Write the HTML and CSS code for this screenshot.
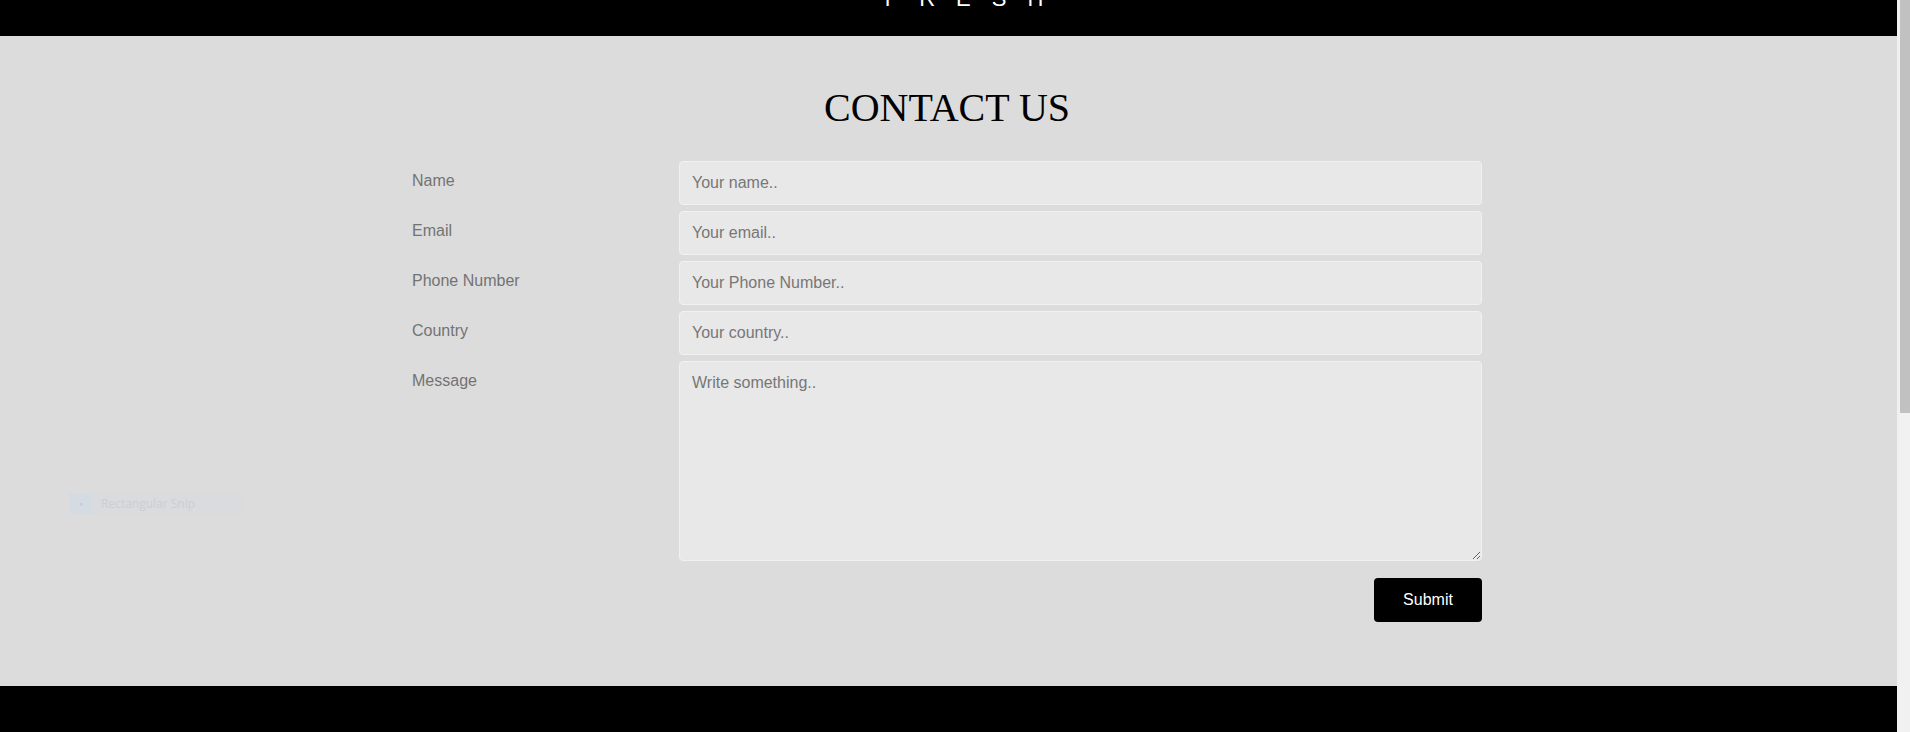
FILE: index.html
```html
<!DOCTYPE html>
<html lang="en">
<head>
<meta charset="utf-8">
<title>Contact Us</title>
<link rel="stylesheet" href="styles.css">
</head>
<body>
<div class="page">
  <header class="topbar">
    <span class="brand">FRESH</span>
  </header>
  <main class="contact">
    <h1 class="title">CONTACT US</h1>
    <form class="form">
      <label class="label" for="name">Name</label>
      <input class="field" id="name" type="text" placeholder="Your name..">
      <label class="label" for="email">Email</label>
      <input class="field" id="email" type="text" placeholder="Your email..">
      <label class="label" for="phone">Phone Number</label>
      <input class="field" id="phone" type="text" placeholder="Your Phone Number..">
      <label class="label" for="country">Country</label>
      <input class="field" id="country" type="text" placeholder="Your country..">
      <label class="label" for="message">Message</label>
      <textarea class="field area" id="message" placeholder="Write something.."></textarea>
      <div class="actions">
        <button class="submit" type="button">Submit</button>
      </div>
    </form>
    <div class="snip"><span class="snip-icon">&#9679;</span><span class="snip-text">Rectangular Snip</span></div>
  </main>
  <footer class="footer"></footer>
</div>
<div class="scrollbar"><div class="thumb"></div></div>
</body>
</html>
```
FILE: styles.css
```css
html, body {
  margin: 0;
  padding: 0;
  height: 100%;
  overflow: hidden;
  background: #000;
}
.page {
  width: calc(100% - 13px);
  font-family: "Liberation Sans", Arial, sans-serif;
}
.topbar {
  height: 36px;
  background: #000;
  overflow: hidden;
  display: flex;
  justify-content: center;
}
.brand {
  display: block;
  color: #fff;
  font-family: "Liberation Sans", Arial, sans-serif;
  font-size: 22px;
  line-height: 22px;
  letter-spacing: 21px;
  margin-top: -12px;
  margin-left: 52px;
}
.contact {
  position: relative;
  height: 650px;
  box-sizing: border-box;
  padding-top: 49px;
  padding-right: 3px;
  background: #dcdcdc;
}
.title {
  margin: 0 0 30px;
  text-align: center;
  font-family: "Liberation Serif", "Times New Roman", serif;
  font-weight: normal;
  font-size: 40px;
  line-height: 46px;
  color: #000;
}
.form {
  width: 1070px;
  margin: 0 auto;
  display: grid;
  grid-template-columns: 267px 1fr;
  row-gap: 6px;
}
.label {
  padding-top: 11px;
  font-size: 16px;
  line-height: 18px;
  color: #737373;
}
.field {
  box-sizing: border-box;
  width: 100%;
  height: 44px;
  margin: 0;
  padding: 12px;
  border: 1px solid #f1f1f1;
  border-radius: 4px;
  background: #e8e8e8;
  font-family: "Liberation Sans", Arial, sans-serif;
  font-size: 16px;
  line-height: 18px;
  color: #333;
  outline: none;
}
.field::placeholder {
  color: #777;
}
.area {
  height: 200px;
  resize: vertical;
}
.actions {
  grid-column: 2;
  display: flex;
  justify-content: flex-end;
  padding-top: 11px;
}
.submit {
  width: 108px;
  height: 44px;
  border: none;
  border-radius: 4px;
  background: #000;
  color: #fff;
  font-family: "Liberation Sans", Arial, sans-serif;
  font-size: 16px;
  cursor: pointer;
}
.footer {
  height: 60px;
  background: #000;
}
.snip {
  position: absolute;
  left: 69px;
  top: 457px;
  width: 173px;
  height: 21px;
  display: flex;
  align-items: center;
  background: #d9dbdf;
}
.snip-icon {
  width: 24px;
  height: 21px;
  display: flex;
  align-items: center;
  justify-content: center;
  background: #d5dbe3;
  color: #c9cdd3;
  font-size: 7px;
}
.snip-text {
  padding-left: 8px;
  font-family: "Open Sans", sans-serif;
  font-size: 12px;
  color: #cbced3;
}
.scrollbar {
  position: fixed;
  top: 0;
  right: 0;
  width: 13px;
  height: 100%;
  background: #f1f1f1;
}
.thumb {
  margin-left: 3px;
  width: 10px;
  height: 413px;
  background: #c1c1c1;
}
```
